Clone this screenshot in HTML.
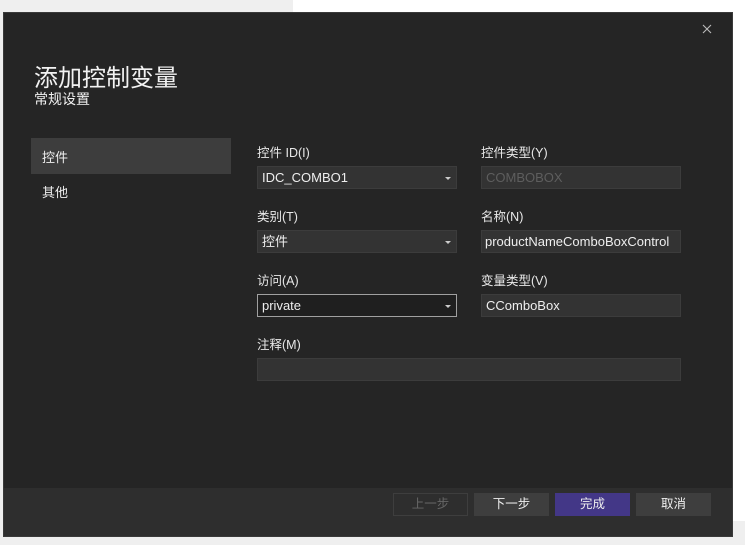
<!DOCTYPE html>
<html><head><meta charset="utf-8"><style>
*{box-sizing:border-box;margin:0;padding:0}
body{width:745px;height:545px;background:#efefef;position:relative;overflow:hidden;font-family:"Liberation Sans","Noto Sans CJK SC",sans-serif;color:#f0f0f0}
.wt{position:absolute;left:293px;top:0;width:452px;height:521px;background:#fff}
.dlg{position:absolute;left:3px;top:12px;width:730px;height:525px;background:#252525;border:1px solid #3a3a3a}
.ft{position:absolute;left:0;right:0;top:475px;bottom:0;background:#2e2e2e}
.a{position:absolute}
.t1{left:30px;top:45px;font-size:24px;color:#f2f2f2}
.t2{left:30px;top:76px;font-size:14px}
.nav{left:27px;top:125px;width:200px;height:36px;background:#3d3d3d}
.nt{font-size:13px;color:#eee}
.lb{font-size:12.5px;color:#e8e8e8}
.in{position:absolute;height:23px;background:#333;border:1px solid #3c3c3c;font-size:13px;padding:3px 4px;line-height:15px;color:#eee;white-space:nowrap;overflow:hidden}
.dd::after{content:"";position:absolute;right:5px;top:10px;border-left:3px solid transparent;border-right:3px solid transparent;border-top:3px solid #ccc}
.btn{position:absolute;top:480px;width:75px;height:23px;background:#3e3e3e;font-size:12.5px;text-align:center;line-height:23px;color:#eee}
</style></head><body>
<div class="wt"></div>
<div class="dlg">
<div class="ft"></div>
<svg class="a" style="left:698px;top:11px" width="10" height="10"><path d="M1 1L9 9M9 1L1 9" stroke="#bbb" stroke-width="1.1"/></svg>
<div class="a t1">添加控制变量</div>
<div class="a t2">常规设置</div>
<div class="a nav"></div>
<div class="a nt" style="left:38px;top:134px">控件</div>
<div class="a nt" style="left:38px;top:169px">其他</div>
<div class="a lb" style="left:253px;top:129px">控件 ID(I)</div>
<div class="a lb" style="left:477px;top:129px">控件类型(Y)</div>
<div class="a lb" style="left:253px;top:193px">类别(T)</div>
<div class="a lb" style="left:477px;top:193px">名称(N)</div>
<div class="a lb" style="left:253px;top:257px">访问(A)</div>
<div class="a lb" style="left:477px;top:257px">变量类型(V)</div>
<div class="a lb" style="left:253px;top:321px">注释(M)</div>
<div class="in dd" style="left:253px;top:153px;width:200px">IDC_COMBO1</div>
<div class="in" style="left:477px;top:153px;width:200px;color:#5e5e5e">COMBOBOX</div>
<div class="in dd" style="left:253px;top:217px;width:200px">控件</div>
<div class="in" style="left:477px;top:217px;width:200px;padding-left:3px">productNameComboBoxControl</div>
<div class="in dd" style="left:253px;top:281px;width:200px;background:#1f1f1f;border-color:#a0a0a0">private</div>
<div class="in" style="left:477px;top:281px;width:200px">CComboBox</div>
<div class="in" style="left:253px;top:345px;width:424px"></div>
<div class="btn" style="left:389px;background:#2e2e2e;border:1px solid #3e3e3e;color:#666;line-height:21px">上一步</div>
<div class="btn" style="left:470px">下一步</div>
<div class="btn" style="left:551px;background:#433787">完成</div>
<div class="btn" style="left:632px">取消</div>
</div>
</body></html>
